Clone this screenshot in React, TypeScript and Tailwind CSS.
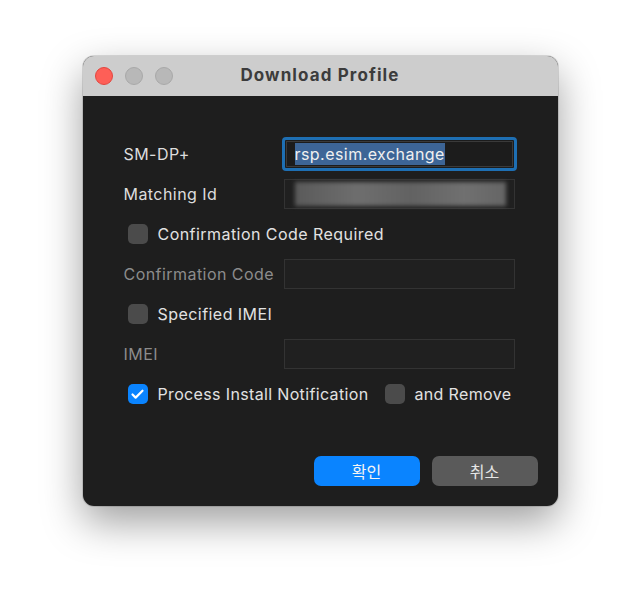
import { Check } from "lucide-react";

function Checkbox({ checked }: { checked?: boolean }) {
  return (
    <span
      className={
        checked
          ? "flex h-5 w-5 shrink-0 items-center justify-center rounded-[5px] bg-[#0a84ff]"
          : "block h-5 w-5 shrink-0 rounded-[5px] bg-[#4b4b4b]"
      }
    >
      {checked && <Check size={15} strokeWidth={3.5} className="text-white" />}
    </span>
  );
}

function Field({ children, focused }: { children?: React.ReactNode; focused?: boolean }) {
  if (focused) {
    return (
      <div className="ml-auto h-[34px] w-[235px] rounded-[4px] border-[3px] border-[#1e6fb3] bg-[#1c1c1c] p-px">
        <div className="flex h-full items-center border border-[#3a3a3a] pl-[8px]">{children}</div>
      </div>
    );
  }
  return (
    <div className="ml-auto mr-[2px] flex h-[30px] w-[231px] items-center border border-[#333333] bg-[#202020]">
      {children}
    </div>
  );
}

export default function App() {
  return (
    <div className="min-h-[616px] w-[640px] bg-white pt-[56px] font-['Inter','Liberation_Sans',sans-serif]">
      <div className="mx-auto w-[475px] overflow-hidden rounded-[11px] bg-[#1e1e1e] shadow-[0_16px_40px_rgba(0,0,0,0.38),0_0_0_1px_rgba(0,0,0,0.12)]">
        {/* title bar */}
        <div className="relative flex h-[40px] items-center justify-center bg-[#cdcdcd]">
          <div className="absolute left-[12px] top-[11px] flex gap-[12px]">
            <span className="h-[18px] w-[18px] rounded-full border border-[#e2463f] bg-[#fe5f57]" />
            <span className="h-[18px] w-[18px] rounded-full border border-[#a8a8a8] bg-[#b8b8b8]" />
            <span className="h-[18px] w-[18px] rounded-full border border-[#a8a8a8] bg-[#b8b8b8]" />
          </div>
          <span className="text-[17px] font-bold tracking-[1.1px] text-[#3c3c3c]">Download Profile</span>
        </div>

        {/* body */}
        <div className="whitespace-nowrap pl-[41px] pr-[41px] pt-[38px] text-[16px] tracking-[0.45px]">
          <div className="flex h-10 items-center">
            <span className="text-[#dddddd]">SM-DP+</span>
            <Field focused>
              <span className="bg-[#3d6596] leading-[22px] text-[#f0f0f0]">rsp.esim.exchange</span>
            </Field>
          </div>
          <div className="flex h-10 items-center">
            <span className="text-[#dddddd]">Matching Id</span>
            <Field>
              <div className="ml-[10px] h-[24px] w-[211px] bg-[linear-gradient(90deg,#5a5a5a,#6e6e6e_30%,#626262_55%,#707070_80%,#656565)] blur-[2px]" />
            </Field>
          </div>
          <div className="flex h-10 items-center gap-[10px] pl-[4px]">
            <Checkbox />
            <span className="text-[#e2e2e2]">Confirmation Code Required</span>
          </div>
          <div className="flex h-10 items-center">
            <span className="text-[#8c8c8c]">Confirmation Code</span>
            <Field />
          </div>
          <div className="flex h-10 items-center gap-[10px] pl-[4px]">
            <Checkbox />
            <span className="text-[#e2e2e2]">Specified IMEI</span>
          </div>
          <div className="flex h-10 items-center">
            <span className="text-[#8c8c8c]">IMEI</span>
            <Field />
          </div>
          <div className="-mr-[10px] flex h-10 items-center pl-[4px] tracking-[0.35px]">
            <Checkbox checked />
            <span className="ml-[10px] shrink-0 text-[#e2e2e2]">Process Install Notification</span>
            <span className="ml-[17px] shrink-0">
              <Checkbox />
            </span>
            <span className="ml-[9px] shrink-0 text-[#e2e2e2]">and Remove</span>
          </div>
        </div>

        {/* buttons */}
        <div className="flex justify-end gap-[12px] pb-[20px] pr-[20px] pt-[42px] font-['Noto_Sans_CJK_KR',sans-serif] text-[16px]">
          <button className="h-[30px] w-[106px] rounded-[7px] bg-[#0a84ff] text-[#f4f4f4]">확인</button>
          <button className="h-[30px] w-[106px] rounded-[7px] bg-[#5a5a5a] text-[#e6e6e6]">취소</button>
        </div>
      </div>
    </div>
  );
}
